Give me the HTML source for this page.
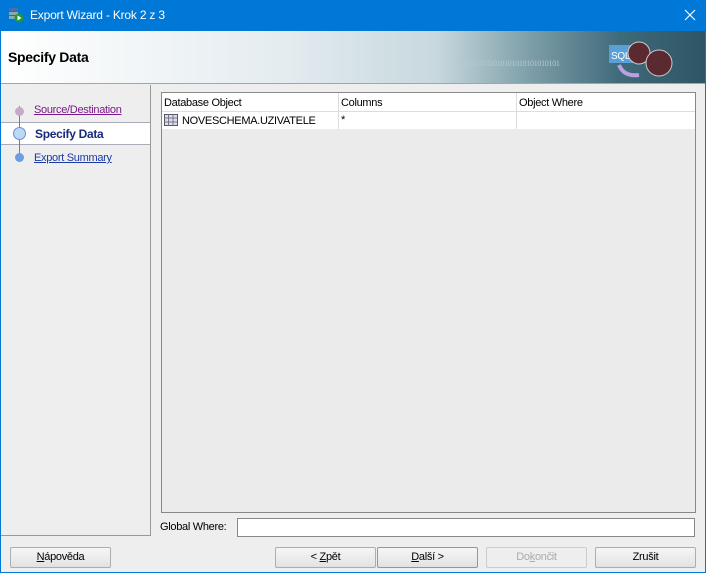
<!DOCTYPE html><html><head><style>
*{box-sizing:border-box;margin:0;padding:0}
body{width:706px;height:573px;background:#0078d7;font-family:"Liberation Sans",sans-serif;font-size:11px;position:relative;overflow:hidden}
.win{position:absolute;left:1px;top:31px;width:704px;height:541px;background:#eeeeee}
.abs{position:absolute}
.btn{position:absolute;top:547px;height:21px;border:1px solid #adadad;border-radius:2px;background:linear-gradient(#f6f6f6,#e2e2e2);text-align:center;line-height:19px;font-size:11px;color:#000;letter-spacing:-0.3px}
u{text-decoration:underline}
.win .abs{letter-spacing:-0.3px}
</style></head><body>
<svg class="abs" style="left:9px;top:8px" width="15" height="15"><rect x="0" y="0" width="9" height="3" fill="#4a6fa8"/><rect x="0" y="4" width="9" height="3" fill="#8aa"/><rect x="0" y="8" width="6" height="3" fill="#8aa"/><circle cx="10" cy="10" r="4.5" fill="#1a9a3a"/><path d="M8.5 7.5L12.5 10L8.5 12.5Z" fill="#fff"/></svg>
<div class="abs" style="left:30px;top:8px;color:#fff;font-size:12px;letter-spacing:-0.2px">Export Wizard - Krok 2 z 3</div>
<svg class="abs" style="left:684px;top:9px" width="12" height="12"><path d="M1 1L11 11M11 1L1 11" stroke="#fff" stroke-width="1.2"/></svg>
<div class="win">
 <div class="abs" style="left:0;top:0;width:704px;height:53px;background:linear-gradient(90deg,#fff 0%,#e4ecf0 40%,#c7d8de 62%,#7e9fa9 75%,#3f6a7a 88%,#2d5566 100%);border-bottom:1px solid #9aa"></div>
 <div class="abs" style="left:7px;top:18px;font-size:14px;font-weight:bold">Specify Data</div>
 <div class="abs" style="left:455px;top:28px;font-size:8px;color:#b6c8cf;font-family:'Liberation Serif',serif">0101010101010101010101010101</div>
 <svg class="abs" style="left:598px;top:4px" width="80" height="48"><rect x="10" y="10" width="24" height="18" fill="#5aa0d8"/><text x="12" y="24" fill="#fff" font-size="10">SQL</text><circle cx="40" cy="18" r="11" fill="#5a2a30" stroke="#ccc"/><circle cx="60" cy="28" r="13" fill="#5a2a30" stroke="#ccc"/><path d="M20 30Q25 42 40 40" stroke="#b9a0e0" stroke-width="4" fill="none"/></svg>
 <div class="abs" style="left:0;top:54px;width:150px;height:451px;border-right:1px solid #999;border-bottom:1px solid #999"></div>
 <div class="abs" style="left:0;top:91px;width:149px;height:23px;background:#fff;border-top:1px solid #aab;border-bottom:1px solid #aab"></div>
 <div class="abs" style="left:18px;top:75px;width:1px;height:52px;background:#6a7fb0"></div>
 <div class="abs" style="left:14px;top:76px;width:9px;height:9px;border-radius:50%;background:#c8a8c8"></div>
 <div class="abs" style="left:12px;top:96px;width:13px;height:13px;border-radius:50%;background:#bcd8f4;border:1px solid #6a90c8"></div>
 <div class="abs" style="left:14px;top:122px;width:9px;height:9px;border-radius:50%;background:#6a9ee0"></div>
 <div class="abs" style="left:33px;top:73px;color:#7a1a8a;text-decoration:underline">Source/Destination</div>
 <div class="abs" style="left:34px;top:96px;color:#1a2a7a;font-weight:bold;font-size:12px">Specify Data</div>
 <div class="abs" style="left:33px;top:121px;color:#1a3aa8;text-decoration:underline">Export Summary</div>
 <div class="abs" style="left:160px;top:61px;width:535px;height:421px;border:1px solid #888;background:#ebebeb">
  <div class="abs" style="left:0;top:0;width:533px;height:19px;background:#fff;border-bottom:1px solid #ddd"></div>
  <div class="abs" style="left:0;top:19px;width:533px;height:17px;background:#fff"></div>
  <div class="abs" style="left:176px;top:0;width:1px;height:36px;background:#ddd"></div>
  <div class="abs" style="left:354px;top:0;width:1px;height:36px;background:#ddd"></div>
  <div class="abs" style="left:2px;top:4px">Database Object</div>
  <div class="abs" style="left:179px;top:4px">Columns</div>
  <div class="abs" style="left:357px;top:4px">Object Where</div>
  <svg class="abs" style="left:2px;top:21px" width="14" height="12"><rect x=".5" y=".5" width="13" height="11" fill="#dde" stroke="#556"/><path d="M.5 4H13.5M.5 8H13.5M4.5 .5V11.5M9 .5V11.5" stroke="#778"/></svg>
  <div class="abs" style="left:20px;top:22px">NOVESCHEMA.UZIVATELE</div>
  <div class="abs" style="left:179px;top:21px">*</div>
 </div>
 <div class="abs" style="left:159px;top:490px">Global Where:</div>
 <div class="abs" style="left:236px;top:487px;width:458px;height:19px;background:#fff;border:1px solid #888"></div>
</div>
<div class="btn" style="left:10px;width:101px"><u>N</u>ápověda</div>
<div class="btn" style="left:275px;width:101px">&lt; <u>Z</u>pět</div>
<div class="btn" style="left:377px;width:101px;border-color:#6d9fd8"><u>D</u>alší &gt;</div>
<div class="btn" style="left:486px;width:101px;color:#aaa;background:#eee;border-color:#ccc">Do<u>k</u>ončit</div>
<div class="btn" style="left:595px;width:101px">Zrušit</div>
</body></html>
